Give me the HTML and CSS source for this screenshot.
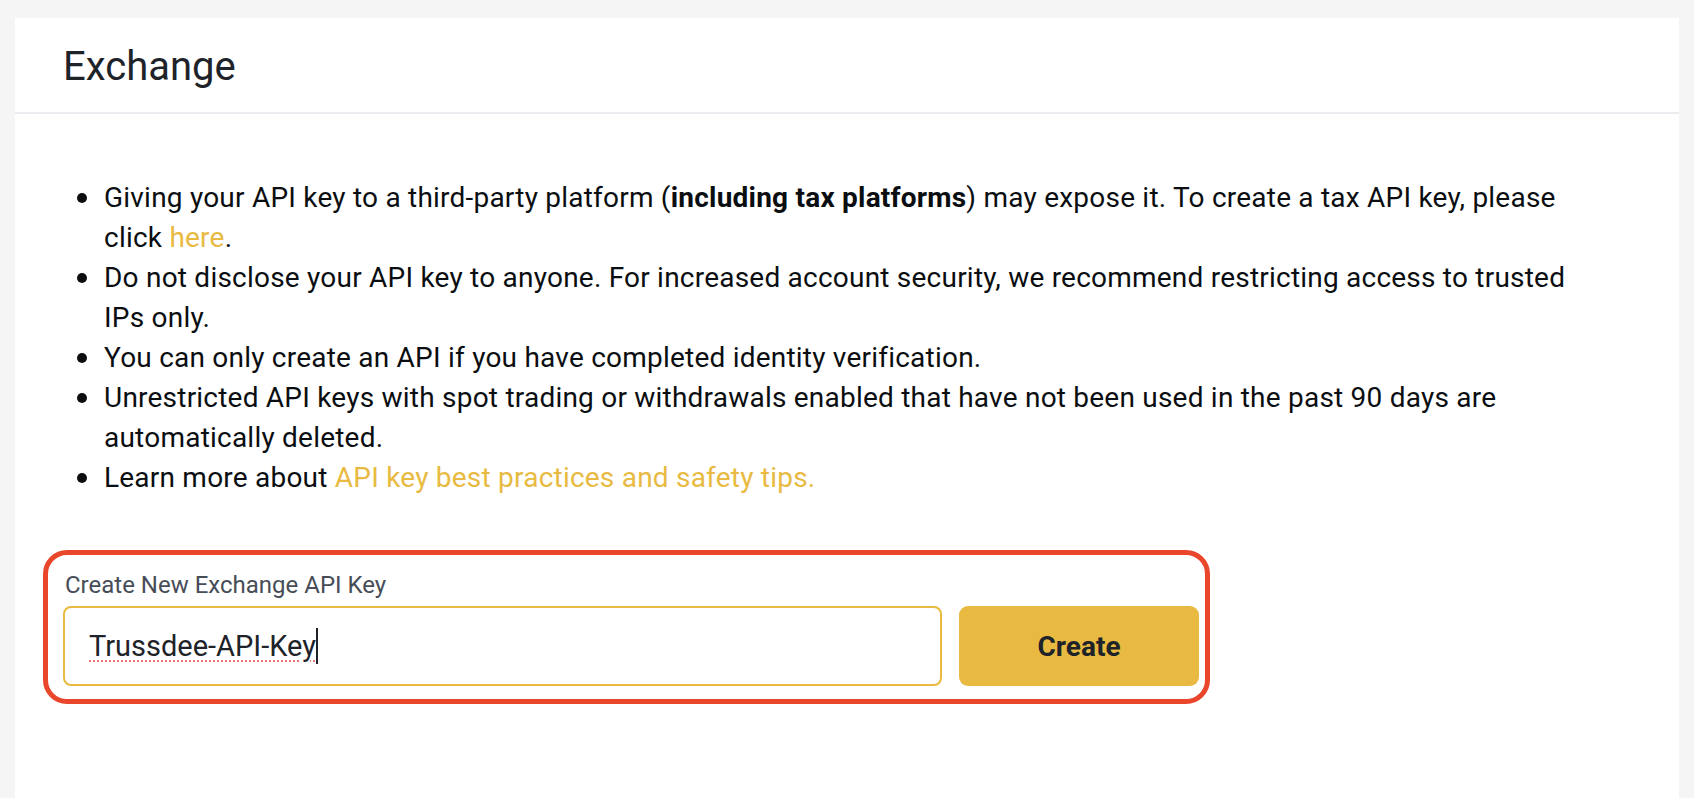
FILE: index.html
```html
<!DOCTYPE html>
<html lang="en">
<head>
<meta charset="utf-8">
<title>Exchange API Key</title>
<link rel="stylesheet" href="styles.css">
</head>
<body>
<main class="card">
  <header class="card-header">
    <h1 class="card-title">Exchange</h1>
  </header>
  <section class="card-body">
    <ul class="notes">
      <li>Giving your API key to a third-party platform (<strong>including tax platforms</strong>) may expose it. To create a tax API key, please click <a class="link" href="#">here</a>.</li>
      <li>Do not disclose your API key to anyone. For increased account security, we recommend restricting access to trusted IPs only.</li>
      <li>You can only create an API if you have completed identity verification.</li>
      <li>Unrestricted API keys with spot trading or withdrawals enabled that have not been used in the past 90 days are automatically deleted.</li>
      <li>Learn more about <a class="link" href="#">API key best practices and safety tips.</a></li>
    </ul>
    <form class="form-box" onsubmit="return false">
      <label class="field-label" for="key-name">Create New Exchange API Key</label>
      <div class="field-row">
        <div class="field" id="key-name"><span class="field-value">Trussdee-API-Key</span><span class="caret"></span></div>
        <button class="btn-create" type="button">Create</button>
      </div>
    </form>
  </section>
</main>
</body>
</html>
```
FILE: styles.css
```css
* { box-sizing: border-box; }

html, body {
  margin: 0;
  height: 100%;
}

body {
  background: #f5f5f5;
  padding: 18px 15px 0;
  font-family: Roboto, "Liberation Sans", Arial, sans-serif;
  color: #1e2329;
  overflow: hidden;
}

.card {
  background: #ffffff;
  min-height: calc(100vh - 18px);
}

.card-header {
  padding: 25px 48px 21px;
  border-bottom: 2px solid #eaecef;
}

.card-title {
  margin: 0;
  font-size: 40px;
  line-height: 48px;
  font-weight: 400;
  color: #1e2329;
}

.card-body {
  padding: 64px 48px;
}

.notes {
  list-style: none;
  margin: 0;
  padding: 0 0 0 41px;
  max-width: 1521px;
  font-size: 28px;
  line-height: 40px;
  letter-spacing: 0.22px;
  color: #0b0e11;
}

.notes li {
  max-width: 1480px;
}

.notes li::before {
  content: "";
  display: inline-block;
  width: 10px;
  height: 10px;
  border-radius: 50%;
  background: #0b0e11;
  margin-left: -27px;
  margin-right: 17px;
  vertical-align: 4px;
}

.notes strong {
  font-weight: 700;
}

.link {
  color: #e8ba41;
  text-decoration: none;
}

.form-box {
  width: 1167px;
  margin: 52px 0 0 -20px;
  padding: 14px 6px 13px 15px;
  border: 5px solid #e9462b;
  border-radius: 24px;
}

.field-label {
  display: block;
  margin: 0 0 5px 2px;
  font-size: 24px;
  line-height: 32px;
  color: #474d57;
}

.field-row {
  display: flex;
  gap: 17px;
}

.field {
  flex: 1;
  height: 80px;
  display: flex;
  align-items: center;
  padding: 0 24px;
  border: 2px solid #e8ba41;
  border-radius: 8px;
  font-size: 29px;
  color: #1e2329;
}

.field-value {
  text-decoration: underline dotted #f07373;
  text-decoration-thickness: 2px;
  text-underline-offset: 4px;
}

.caret {
  width: 2px;
  height: 36px;
  background: #1e2329;
}

.btn-create {
  flex: 0 0 240px;
  height: 80px;
  border: none;
  border-radius: 9px;
  background: #e8ba41;
  color: #1e2329;
  font-family: Roboto, "Liberation Sans", Arial, sans-serif;
  font-size: 28px;
  font-weight: 700;
  cursor: pointer;
}
```
